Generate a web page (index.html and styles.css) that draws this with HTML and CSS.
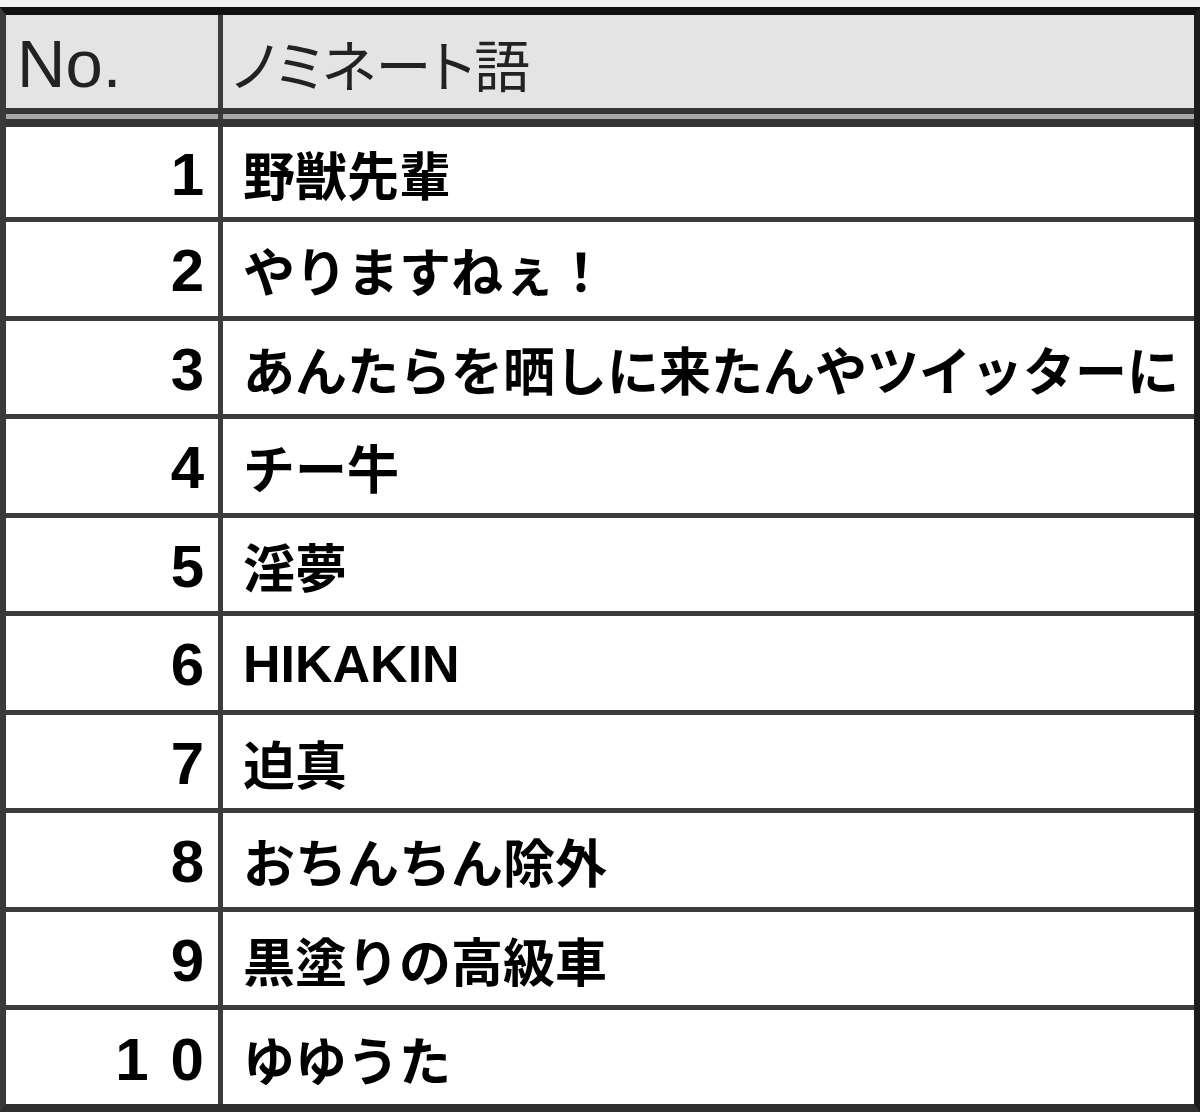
FILE: index.html
```html
<!DOCTYPE html>
<html lang="ja">
<head>
<meta charset="utf-8">
<title>ノミネート語</title>
<link rel="stylesheet" href="styles.css">
</head>
<body>
<div class="sheet">
  <div class="row head">
    <div class="cell num-h">No.</div>
    <div class="cell word-h">ノミネート語</div>
  </div>
  <div class="row sep">
    <div class="cell num"></div>
    <div class="cell word"></div>
  </div>
  <div class="row first">
    <div class="cell num">1</div>
    <div class="cell word">野獣先輩</div>
  </div>
  <div class="row">
    <div class="cell num">2</div>
    <div class="cell word">やりますねぇ！</div>
  </div>
  <div class="row">
    <div class="cell num">3</div>
    <div class="cell word">あんたらを晒しに来たんやツイッターに</div>
  </div>
  <div class="row">
    <div class="cell num">4</div>
    <div class="cell word">チー牛</div>
  </div>
  <div class="row">
    <div class="cell num">5</div>
    <div class="cell word">淫夢</div>
  </div>
  <div class="row">
    <div class="cell num">6</div>
    <div class="cell word">HIKAKIN</div>
  </div>
  <div class="row">
    <div class="cell num">7</div>
    <div class="cell word">迫真</div>
  </div>
  <div class="row">
    <div class="cell num">8</div>
    <div class="cell word">おちんちん除外</div>
  </div>
  <div class="row">
    <div class="cell num">9</div>
    <div class="cell word">黒塗りの高級車</div>
  </div>
  <div class="row last">
    <div class="cell num"><span class="wide">10</span></div>
    <div class="cell word">ゆゆうた</div>
  </div>
</div>
</body>
</html>
```

FILE: styles.css
```css
html, body {
  margin: 0;
  padding: 0;
}
body {
  background: #f2f2f2;
  width: 1200px;
  height: 1112px;
  overflow: hidden;
}
.sheet {
  margin-top: 7px;
  border-top: 8px solid #111;
  border-left: 6px solid #3a3a3a;
  border-right: 6px solid #1c1c1c;
  border-bottom: 8px solid #2e2e2e;
  background: #fff;
  height: 1089px;
}
.row {
  display: grid;
  grid-template-columns: 217px 1fr;
  height: 98.5px;
  box-sizing: border-box;
  border-bottom: 5px solid #3c3c3c;
}
.row.head {
  height: 93px;
  border-bottom: none;
  background: #e4e4e4;
}
.row.sep {
  height: 19px;
  border-top: 6px solid #353535;
  border-bottom: 8px solid #353535;
  background: #a8a8a8;
}
.row.first {
  height: 95px;
}
.row.last {
  height: 94px;
  border-bottom: none;
}
.cell {
  display: flex;
  align-items: center;
  min-width: 0;
}
.num {
  border-right: 5px solid #3c3c3c;
  justify-content: flex-end;
  padding-right: 14px;
  font-family: "Liberation Sans", Arial, sans-serif;
  font-weight: bold;
  font-size: 60px;
  color: #000;
  padding-top: 4px;
}
.wide {
  letter-spacing: 22px;
  margin-right: -22px;
}
.word {
  padding-left: 20px;
  font-family: "Liberation Sans", "Noto Sans CJK JP", sans-serif;
  font-weight: bold;
  font-size: 52px;
  color: #000;
  white-space: nowrap;
  padding-top: 2px;
}
.num-h {
  border-right: 5px solid #3c3c3c;
  padding-left: 11px;
  padding-top: 4px;
  font-family: "Liberation Sans", Arial, sans-serif;
  font-size: 67px;
  color: #222;
}
.word-h {
  padding-left: 9px;
  padding-top: 2px;
  font-family: "Noto Sans CJK JP", sans-serif;
  font-size: 56px;
  font-feature-settings: "palt";
  color: #222;
  white-space: nowrap;
}
```
